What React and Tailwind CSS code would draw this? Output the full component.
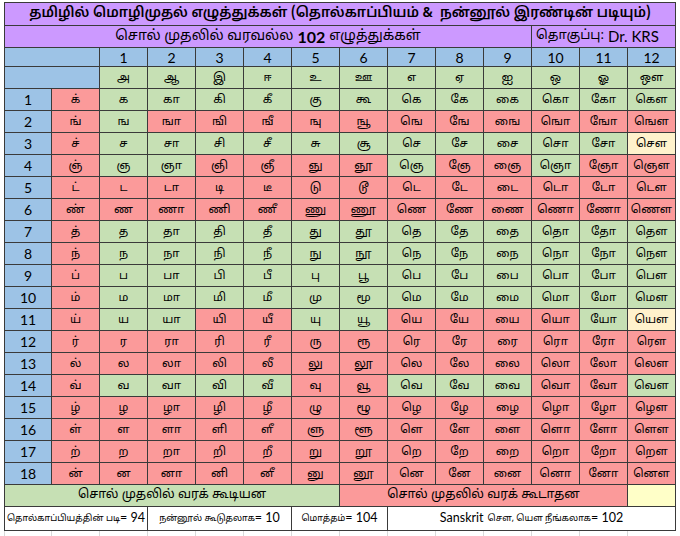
const consonants = ['க', 'ங', 'ச', 'ஞ', 'ட', 'ண', 'த', 'ந', 'ப', 'ம', 'ய', 'ர', 'ல', 'வ', 'ழ', 'ள', 'ற', 'ன'];
const signs = ['', 'ா', 'ி', 'ீ', 'ு', 'ூ', 'ெ', 'ே', 'ை', 'ொ', 'ோ', 'ௌ'];
const vowels = ['அ', 'ஆ', 'இ', 'ஈ', 'உ', 'ஊ', 'எ', 'ஏ', 'ஐ', 'ஒ', 'ஓ', 'ஔ'];

// G = can start a word, R = cannot, Y = sanskrit exception
const marks = [
  'GGGGGGGGGGGG',
  'GRRRRRRRRRRR',
  'GGGGGGGGGGGY',
  'GGRRRRGRRGRR',
  'RRRRRRRRRRRR',
  'RRRRRRRRRRRR',
  'GGGGGGGGGGGG',
  'GGGGGGGGGGGG',
  'GGGGGGGGGGGG',
  'GGGGGGGGGGGG',
  'GGRRGGRRRRGY',
  'RRRRRRRRRRRR',
  'RRRRRRRRRRRR',
  'GGGGRRGGGRRG',
  'RRRRRRRRRRRR',
  'RRRRRRRRRRRR',
  'RRRRRRRRRRRR',
  'RRRRRRRRRRRR',
];

const cellBg = {
  G: 'bg-[#c6e0b4]',
  R: 'bg-[#fb9a9a]',
  Y: 'bg-[#fff2cc]',
};

const tamil = "font-['Latha','Noto_Sans_Tamil','Lohit_Tamil','Noto_Sans',sans-serif]";
const latin = "font-['Lato','Liberation_Sans',sans-serif]";

export default function App() {
  return (
    <div className="w-[680px] h-[536px] bg-white pt-[2px] pl-[4px] overflow-hidden text-black">
      <div className="grid w-fit grid-cols-[46px_47px_repeat(12,47px)] grid-rows-[22px_21px_18px_21px_repeat(18,21px)_21px_23px] gap-px bg-[#3a3a3a] border border-[#3a3a3a]">
        {/* Title */}
        <div className={`col-span-14 bg-[#cc99ff] flex items-center justify-center whitespace-nowrap text-[13.8px] font-semibold ${tamil}`}>
          தமிழில் மொழிமுதல் எழுத்துக்கள் (தொல்காப்பியம் &amp;&nbsp; நன்னூல் இரண்டின் படியும்)
        </div>

        <div className={`col-span-11 bg-[#cc99ff] flex items-center justify-center whitespace-nowrap text-[14px] ${tamil}`}>
          சொல் முதலில் வரவல்ல <span className={`${latin} font-bold text-[16px] mx-1`}>102</span> எழுத்துக்கள்
        </div>
        <div className={`col-span-3 bg-[#cc99ff] flex items-center whitespace-nowrap pl-1 text-[13px] ${tamil}`}>
          தொகுப்பு: <span className={`${latin} text-[15px] ml-1`}>Dr. KRS</span>
        </div>

        {/* Column numbers */}
        <div className="col-span-2 bg-[#9dc3e6]" />
        {vowels.map((_, i) => (
          <div key={i} className={`bg-[#9dc3e6] flex items-center justify-center text-[14px] ${latin}`}>
            {i + 1}
          </div>
        ))}

        {/* Vowels */}
        <div className="col-span-2 bg-[#9dc3e6]" />
        {vowels.map((v) => (
          <div key={v} className={`bg-[#c6e0b4] flex items-center justify-center pt-[3px] text-[11.5px] ${tamil}`}>
            {v}
          </div>
        ))}

        {/* Consonant rows */}
        {consonants.map((c, r) => (
          <Row key={c} index={r + 1} consonant={c} mark={marks[r]} />
        ))}

        {/* Legend */}
        <div className={`col-span-7 bg-[#c6e0b4] flex items-center justify-center whitespace-nowrap text-[12.5px] ${tamil}`}>
          சொல் முதலில் வரக் கூடியன
        </div>
        <div className={`col-span-6 bg-[#fb9a9a] flex items-center justify-center whitespace-nowrap text-[12.5px] ${tamil}`}>
          சொல் முதலில் வரக் கூடாதன
        </div>
        <div className="bg-[#ffffc8]" />

        {/* Totals */}
        <div className={`col-span-3 bg-white flex items-center justify-center whitespace-nowrap text-[9px] ${tamil}`}>
          தொல்காப்பியத்தின் படி<span className={`${latin} text-[12.5px]`}>= 94</span>
        </div>
        <div className={`col-span-3 bg-white flex items-center justify-center whitespace-nowrap text-[9px] ${tamil}`}>
          நன்னூல் கூடுதலாக<span className={`${latin} text-[12.5px]`}>= 10</span>
        </div>
        <div className={`col-span-2 bg-white flex items-center justify-center whitespace-nowrap text-[9px] ${tamil}`}>
          மொத்தம்<span className={`${latin} text-[12.5px]`}>= 104</span>
        </div>
        <div className={`col-span-6 bg-white flex items-center justify-center whitespace-nowrap text-[9px] ${tamil}`}>
          <span className={`${latin} text-[12.5px] mr-1`}>Sanskrit</span>
          சௌ, யௌ நீங்கலாக<span className={`${latin} text-[12.5px]`}>= 102</span>
        </div>
      </div>

      {/* empty spreadsheet grid below */}
      <div className="grid w-fit grid-cols-[46px_47px_repeat(12,47px)] gap-px bg-[#d9d9d9] pl-px h-[5px]">
        {Array.from({ length: 14 }).map((_, i) => (
          <div key={i} className="bg-white" />
        ))}
      </div>
    </div>
  );
}

function Row({ index, consonant, mark }) {
  return (
    <>
      <div className={`bg-[#9dc3e6] flex items-center justify-center text-[14px] ${latin}`}>
        {index}
      </div>
      <div className={`bg-[#fb9a9a] flex items-center justify-center pt-[2px] text-[11.5px] ${tamil}`}>
        {consonant + '்'}
      </div>
      {signs.map((s, i) => (
        <div
          key={i}
          className={`${cellBg[mark[i]]} flex items-center justify-center pt-[2px] text-[11.5px] ${tamil}`}
        >
          {consonant + s}
        </div>
      ))}
    </>
  );
}
